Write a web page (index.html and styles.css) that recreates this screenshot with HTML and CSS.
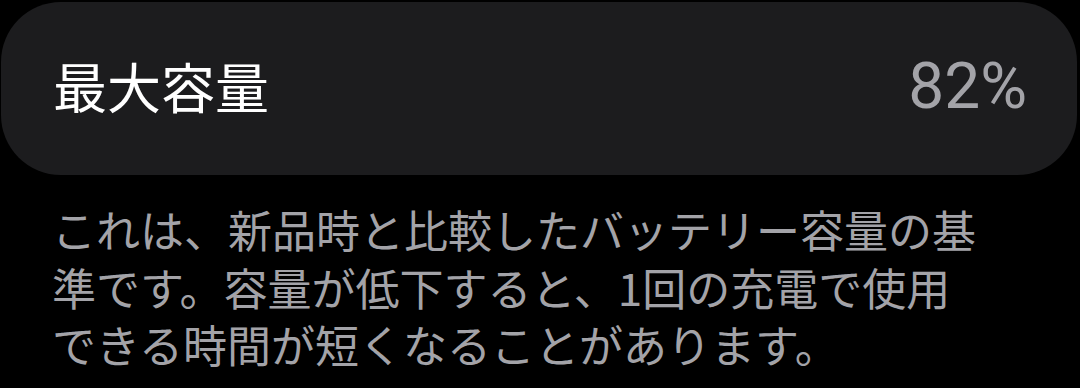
FILE: index.html
```html
<!DOCTYPE html>
<html lang="ja">
<head>
<meta charset="utf-8">
<link rel="stylesheet" href="styles.css">
</head>
<body>
<div class="card">
  <span class="label">最大容量</span>
  <span class="value">82%</span>
</div>
<p class="desc">これは、新品時と比較したバッテリー容量の基<br>準です。容量が低下すると、1回の充電で使用<br>できる時間が短くなることがあります。</p>
</body>
</html>
```
FILE: styles.css
```css
html, body {
  margin: 0;
  background: #000;
}
body {
  width: 1080px;
  height: 388px;
  overflow: hidden;
  font-family: "Noto Sans CJK JP", "Noto Sans", sans-serif;
}
.card {
  margin: 2px 3px 0 1px;
  height: 173px;
  box-sizing: border-box;
  background: #1c1c1e;
  border-radius: 60px;
  display: flex;
  align-items: center;
  justify-content: space-between;
  padding: 0 50px 0 52px;
}
.label {
  color: #fff;
  font-size: 54px;
  line-height: 1;
  margin-bottom: 6px;
}
.value {
  color: #a3a3a8;
  font-family: Roboto, "Noto Sans", sans-serif;
  font-size: 64px;
  line-height: 1;
  margin-bottom: 4px;
}
.desc {
  margin: 26px 0 0;
  padding: 0 0 0 52px;
  color: #a3a3a8;
  font-size: 44px;
  line-height: 57.5px;
  white-space: nowrap;
}
```
